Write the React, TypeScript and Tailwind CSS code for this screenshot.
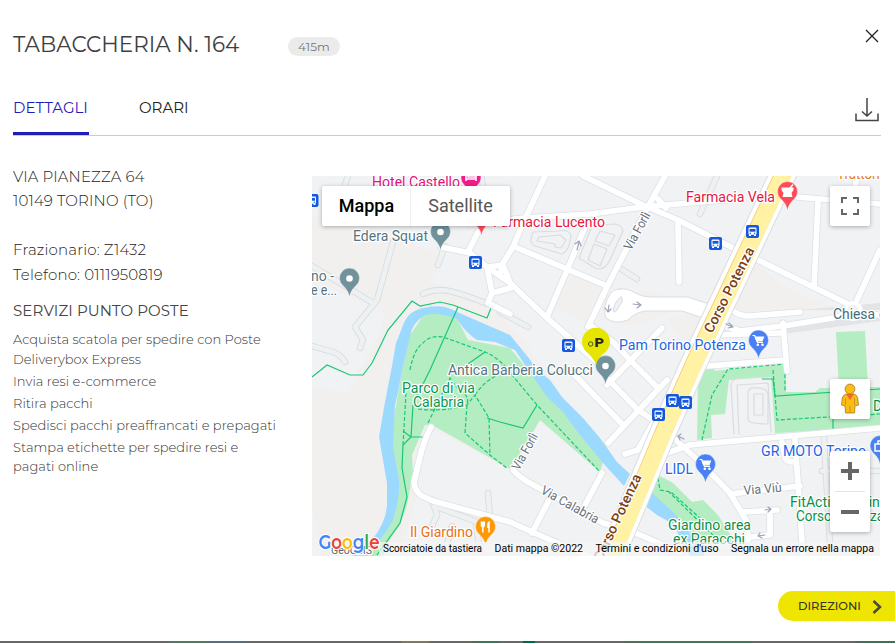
import React from "react";

type LabelProps = {
  x: number;
  y: number;
  w?: number;
  color: string;
  size?: number;
  rotate?: number;
  weight?: number;
  children: string;
};

function Label({ x, y, w, color, size = 14, rotate = 0, weight = 400, children }: LabelProps) {
  return (
    <text
      x={x}
      y={y}
      textLength={w}
      lengthAdjust="spacingAndGlyphs"
      fontSize={size}
      fontWeight={weight}
      fill={color}
      stroke="#fff"
      strokeWidth={2.5}
      strokeLinejoin="round"
      paintOrder="stroke"
      transform={rotate ? `rotate(${rotate} ${x} ${y})` : undefined}
    >
      {children}
    </text>
  );
}

function Pin({ x, y, color, children }: { x: number; y: number; color: string; children?: React.ReactNode }) {
  return (
    <g transform={`translate(${x} ${y})`}>
      <path
        d="M0 18.5C-1 13-3.500 10-6.500 7.200A10 10 0 1 1 6.500 7.200C3.500 10 1 13 0 18.500Z"
        fill={color}
        stroke="#fff"
        strokeOpacity={0.6}
        strokeWidth={0.7}
      />
      {children ?? <circle r={3.3} fill="#fff" />}
    </g>
  );
}

function Bus({ x, y }: { x: number; y: number }) {
  return (
    <g transform={`translate(${x} ${y})`}>
      <rect x={-6.5} y={-6.500} width={13} height={13} rx={2} fill="#1658dd" />
      <rect x={-4} y={-4} width={8} height={7.3} rx={1.300} fill="#fff" />
      <rect x={-3} y={-2.600} width={6} height={2.800} fill="#1658dd" />
      <circle cx={-2.200} cy={1.700} r={0.700} fill="#1658dd" />
      <circle cx={2.200} cy={1.700} r={0.700} fill="#1658dd" />
      <path d="M-3.500 3h2v1.500h-2zM1.500 3h2v1.500h-2z" fill="#fff" />
    </g>
  );
}

function Cart() {
  return (
    <g fill="none" stroke="#fff" strokeWidth={1.2}>
      <path d="M-6-5h2.200L-1 2h5.500" />
      <path d="M-3.200-3.500H5L3.500.3h-5.300Z" fill="#fff" />
      <circle cx={-0.700} cy={4.200} r={0.700} fill="#fff" />
      <circle cx={4} cy={4.200} r={0.700} fill="#fff" />
    </g>
  );
}

const minorRoads = [
  "M393 242L377 300L355 327L363 340L360 348",
  "M312 266L373 303",
  "M438 265L445 246",
  "M423 294Q430 290 443 290Q455 291 488 304",
  "M312 346L333 352Q341 355 345 362",
  "M348 176L344 188",
  "M481 176L484 190",
  "M500 312L528 327",
  "M621 269L637 279",
  "M717 176L700 214",
  "M488 493L490 518",
  "M433 503L437 515L432 526M437 507L488 526M452 526L446 548M476 526L480 550",
  "M824 438L830 545M822 471H880",
];

const mainRoads = [
  "M665 176L650 203L607 287L588 327",
  "M545 176L520 230L513 247L503 263L500 275",
  "M470 224L525 218L590 214L643 207L735 199",
  "M583 176L643 205L678 220L737 250",
  "M758 260L850 305",
  "M515 247L607 286",
  "M585 227L568 268L547 317",
  "M441 247L470 253L487 267L510 283L547 318L597 362",
  "M478 232L468 252",
  "M487 267L492 293L488 303L510 314",
  "M492 293L511 288M487 267L503 265L511 285",
  "M658 199L666 208",
  "M607 378L638 410L653 420",
  "M662 328L607 385",
  "M667 380L608 443",
  "M570 370L623 425",
  "M590 325L613 342L632 362L657 387",
  "M652 425L638 450L625 454",
  "M667 432L700 462L730 493L747 522L748 540",
  "M667 453L690 445L700 444L880 428",
  "M795 440L803 556",
  "M730 494L800 486",
  "M743 512L777 510M770 513V535L750 537",
  "M782 442L785 458Q787 462 795 462",
  "M431 427Q424 440 420 457L414 482Q414 490 422 496L433 501L510 522L557 543L590 556",
  "M516 462L513 470Q518 476 528 482L603 523L633 532L680 552",
  "M602 473L585 505",
  "M550 498L532 533",
  "M818 202L814 287",
  "M797 197L880 204",
  "M880 250L857 300",
  "M857 176L855 187",
  "M735 312Q740 316 750 316L800 312",
  "M725 326L740 331L783 326L833 318L853 313L880 315",
  "M712 335L780 333M783 323L787 371",
  "M708 366L785 360",
  "M678 224L679 282",
];

function MapDrawing() {
  return (
    <svg
      viewBox="312 176 568 380"
      className="block h-full w-full font-[Roboto,sans-serif]"
      role="img"
      aria-label="Mappa"
    >
      <rect x={312} y={176} width={568} height={380} fill="#f0f2f4" />
      <g fill="#f2f0ef">
        <path d="M345 215L400 238L445 257L430 282L488 303L520 335L560 395L622 470L608 482L505 500L425 470L400 556H322L312 510V388L348 392L378 335L385 315L312 278V215Z" />
        <path d="M572 274L605 290L590 325L555 309Z" />
        <path d="M748 258L790 290L840 310L740 316L728 300ZM668 318L712 310L708 340L690 350ZM606 292L640 292L700 300L640 326L600 320Z" />
      </g>
      <path d="M540 422L513 468L602 523L618 485L600 472Z" fill="#f1f2f3" />
      <path d="M428 427L509 469L603 525L500 519L424 497L415 482Z" fill="#f0f2f4" />
      <path d="M783 328L880 312V321L783 334ZM800 310L880 303V310H800Z" fill="#e3e4e6" />

      <g fill="#b5edc2">
        <path d="M403 365L410 335L425 313L445 312L457 318L468 340L510 348L532 375L563 410L603 462L600 472L540 420L530 437L510 469L432 425H425L412 455L413 472L407 505L400 525L388 542L383 556H365L390 520L395 480L389 445Z" />
        <path d="M712 371L785 364L786 392H815L820 388L839 388L836 332L865 331L868 387L880 387V427L775 433L771 377L729 380L725 414L711 415L712 438L697 440Z" />
        <path d="M698 380L702 364L715 367L697 440Z" />
      </g>

      <g fill="#9bd9ff">
        <path d="M392 366L396 343L402 328Q407 311 423 308Q443 303 457 312L487 325L510 335L528 357L537 370L550 380L562 397L583 418L600 438L617 462L630 474L624 486L603 463L580 435L563 412L547 397L525 365L515 350L495 342L477 340Q466 333 457 319Q440 312 425 315Q411 324 410 337L403 366L398 392L395 405L393 447L399 480Q400 500 392 522Q385 534 367 556H352L372 540Q388 520 387 500V483L379 437L385 402Z" />
        <path d="M650 488L667 503L680 513L704 545V556H690L673 524L657 515L644 505Z" />
      </g>
      <path d="M658 475L673 483L692 502L703 500L718 515L736 544L698 545L676 515L651 492Z" fill="#b5edc2" />

      <g fill="none" stroke="#18c777" strokeWidth={1.2}>
        <path d="M312 377L327 365L350 375H363L372 363L388 330L412 301L420 306L440 302L453 305L487 318L491 308M458 307L430 370L416 398M485 352L468 364M413 405L411 437H423M403 445L402 468L407 497L400 523L377 555M403 445L411 437L403 431M487 418L500 422L523 428L537 405" />
        <path
          strokeDasharray="4 2"
          d="M406 393L403 445M410 370Q414 349 423 343Q430 335 443 337L485 352Q500 358 512 375L537 405L600 472M428 423L450 378L458 389Q470 395 467 405L465 433L490 455L508 469M418 409Q445 412 467 405L475 395L489 418L490 455M475 395Q485 380 500 374"
        />
        <path strokeDasharray="4 2" d="M702 440L712 395L728 369L785 364V392M773 370L777 420L880 414M658 478L660 490L671 492L702 520M668 491L720 542" />
        <path d="M762 379H773L775 396L880 389M833 392L833 431" />
      </g>

      <g fill="none" strokeLinecap="round" strokeLinejoin="round">
        {minorRoads.map((d) => (
          <path key={d} d={d} stroke="#d9dde0" strokeWidth={6.5} />
        ))}
        {minorRoads.map((d) => (
          <path key={d} d={d} stroke="#eef1f2" strokeWidth={4.7} />
        ))}
        {mainRoads.map((d) => (
          <path key={d} d={d} stroke="#dde1e5" strokeWidth={7.2} />
        ))}
        {mainRoads.map((d) => (
          <path key={d} d={d} stroke="#fff" strokeWidth={5.7} />
        ))}
        <g stroke="#d9dde0" strokeWidth={1.2}>
          <path d="M533 232Q528 243 535 246L562 254Q570 250 571 235Q568 229 559 231ZM539 237L560 235L566 240L561 248L555 247V244L537 241ZM592 226L579 258L595 268Q604 272 610 260L623 231Q622 225 615 224L600 225ZM600 231L615 235L609 246L595 241ZM594 244L607 249L600 266L588 260Z" />
          <path d="M734 434L731 385Q731 379 740 378L769 377M739 434L737 385L768 383L771 432M755 388Q748 387 748 394V420Q750 424 768 424V395Q767 387 755 388ZM754 394H763V415H754Z" />
        </g>
        <path
          d="M620 289Q628 288 635 293Q643 297 650 297H688L712 305V321L682 311H645Q634 313 628 320Q615 325 606 318Q602 307 610 294Q614 289 620 289Z"
          fill="#fff"
          stroke="#dadee2"
          strokeWidth={1}
        />
        <path d="M621 297Q615 301 613 310Q614 314 617 310L622 302Q623 297 621 297Z" fill="#eff0f3" stroke="#d9dce1" />
        <path d="M785 170L693 365L662 435L608 565" stroke="#dadee3" strokeWidth={27} />
        <path d="M785 170L693 365L662 435L608 565" stroke="#fff" strokeWidth={25} />
        <path d="M785 170L693 365L662 435L608 565" stroke="#f6ca74" strokeWidth={17} />
        <path d="M785.500 170L693.500 365L662.500 435L608.500 565" stroke="#fff2a5" strokeWidth={16.300} />
        <circle cx={853} cy={311} r={8} fill="#eff1f3" stroke="#fff" strokeWidth={4} />
        <path d="M726 324L732 327M729 323L733 327L728 328M577 250L579 242M575 244L579 241L581 246M609 305L608 311M605 308L608 312L611 309M633 304L640 305M637 302L641 305L637 308M678 436L684 439M681 434L678 436L680 440M765 510L770 509M768 507L771 509L768 512M758 536L765 535M760 533L758 536L762 538" stroke="#9ca2bd" strokeWidth={1.200} />
      </g>

      <Bus x={312} y={200.500} />
      <Bus x={475.500} y={262.500} />
      <Bus x={568.500} y={345.500} />
      <Bus x={715.500} y={243.500} />
      <Bus x={752.500} y={231.500} />
      <Bus x={658.500} y={414.500} />
      <Bus x={672.500} y={400.500} />
      <Bus x={685.500} y={402.500} />

      <Pin x={471} y={178} color="#f21d89">
        <path d="M-5-5V3M5-1V3M-5 1H5M-3-1H5V-4H-3Z" fill="none" stroke="#fff" strokeWidth={1.500} />
      </Pin>
      <Pin x={440.500} y={232} color="#71919b" />
      <Pin x={349.500} y={278.500} color="#71919b" />
      <Pin x={481.500} y={217} color="#ff4a57" />
      <Pin x={605.500} y={366} color="#71919b" />
      <Pin x={787.500} y={192} color="#ff4a57">
        <path d="M-6-4.500H2L5-8L6-7L4-4.500H6V-2L4 1L5 5H-5L-4 1L-6-2Z" fill="#fff" />
      </Pin>
      <Pin x={758.500} y={340.500} color="#4a80f5">
        <Cart />
      </Pin>
      <Pin x={705.500} y={464.500} color="#4a80f5">
        <Cart />
      </Pin>
      <Pin x={880} y={446} color="#4a80f5">
        <path d="M-5-2H5V5H-5ZM-2-2V-5H3V-2" fill="none" stroke="#fff" strokeWidth={1.500} />
      </Pin>
      <Pin x={485.500} y={527} color="#ff9805">
        <path d="M-4.800-5.500H-.500V-2Q-.500 0-1.900.5V5.500H-3.400V.5Q-4.800 0-4.800-2ZM1.700 5.500V-3Q2-5.500 4.300-6V5.500H2.800V1H1.700Z" fill="#fff" />
      </Pin>

      <Label x={372} y={187} w={88} color="#e2127b">Hotel Castello</Label>
      <Label x={353} y={241} w={75} color="#567580">Edera Squat</Label>
      <Label x={311} y={281} w={23} color="#567580">no -</Label>
      <Label x={311} y={295} w={26} color="#567580">e e...</Label>
      <Label x={493} y={227} w={112} color="#e6163e">Farmacia Lucento</Label>
      <Label x={686} y={202} w={89} color="#e6163e">Farmacia Vela</Label>
      <Label x={837} y={179} w={50} color="#e47b1b">Trattoria</Label>
      <Label x={619} y={350} w={127} color="#1d65e5">Pam Torino Potenza</Label>
      <Label x={448} y={375} w={145} color="#567580">Antica Barberia Colucci</Label>
      <Label x={833} y={319} w={42} color="#456b7a">Chiesa</Label>
      <Label x={879} y={319} color="#456b7a">d</Label>
      <Label x={402} y={393} w={73} color="#0b9550">Parco di via</Label>
      <Label x={413} y={407} w={51} color="#0b9550">Calabria</Label>
      <Label x={665} y={474} w={28} color="#1d65e5">LIDL</Label>
      <Label x={761} y={456} w={105} color="#1d65e5">GR MOTO Torino</Label>
      <Label x={410} y={537} w={63} color="#e47315">Il Giardino</Label>
      <Label x={668} y={530} w={83} color="#0b8f47">Giardino area</Label>
      <Label x={673} y={544} w={72} color="#0b8f47">ex Paracchi</Label>
      <Label x={790} y={507} w={98} color="#0b8f47">FitActive Torino</Label>
      <Label x={796} y={521} w={88} color="#0b8f47">Corso Potenza</Label>
      <Label x={873} y={411} color="#0b8f47">D</Label>
      <Label x={631} y={251} w={41} color="#687079" size={13} rotate={-61}>Via Forlì</Label>
      <Label x={519} y={471} w={40} color="#687079" size={13} rotate={-61}>Via Forlì</Label>
      <Label x={540} y={493} w={64} color="#687079" size={13} rotate={29}>Via Calabria</Label>
      <Label x={744} y={495} w={38} color="#687079" size={13} rotate={-5}>Via Viù</Label>
      <Label x={712} y={334} w={94} color="#7a3e13" size={14} weight={500} rotate={-63}>Corso Potenza</Label>
      <Label x={602} y={562} w={94} color="#7a3e13" size={14} weight={500} rotate={-65}>Corso Potenza</Label>
      <Label x={331} y={554} w={41} color="#60656b" size={11}>GeoCMS</Label>

      <path d="M596 364.500Q592.500 356.500 586.500 352A14 14 0 1 1 605.500 352Q598.500 356.500 596 364.500Z" fill="#e6e500" />
      <circle cx={590.700} cy={344} r={2.200} fill="none" stroke="#51503b" strokeWidth={1} />
      <text x={594.500} y={347} fontSize={13} fontWeight={900} fill="#29291f" textLength={9.500} lengthAdjust="spacingAndGlyphs">P</text>
    </svg>
  );
}

function Pegman() {
  return (
    <svg viewBox="0 0 20 32" className="h-8 w-5" aria-hidden="true">
      <path d="M6 11Q3 12 2.300 15L1.500 22L5 23L5.500 30H14.500L15 23L18.500 22L17.700 15Q17 12 14 11Z" fill="#fbbc14" stroke="#a77a27" strokeWidth={0.8} />
      <path d="M6 11H14L10 17Z" fill="#ef6a2d" />
      <path d="M5.500 15V22M14.500 15V22M10 23V30" stroke="#c28822" strokeWidth={0.800} />
      <circle cx={10} cy={6} r={4.900} fill="#fbbc14" stroke="#a77a27" strokeWidth={0.8} />
    </svg>
  );
}

function MapPanel() {
  return (
    <section className="relative h-[380px] w-[568px] shrink-0 overflow-hidden font-[Roboto,sans-serif]">
      <MapDrawing />
      <div className="absolute left-[10px] top-[10px] flex h-10 rounded-[2px] bg-white text-[18px] leading-10 shadow-[0_1px_4px_rgba(0,0,0,0.3)]">
        <button className="w-[89px] border-r border-[#f0f0f0] pl-px font-medium text-black">Mappa</button>
        <button className="w-[99px] text-[#565656]">Satellite</button>
      </div>
      <button className="absolute right-[10px] top-[10px] flex h-10 w-10 items-center justify-center rounded-[2px] bg-white shadow-[0_1px_4px_rgba(0,0,0,0.3)]">
        <svg viewBox="0 0 18 18" className="h-[18px] w-[18px]">
          <path d="M1 6V1H6M12 1H17V6M17 12V17H12M6 17H1V12" fill="none" stroke="#666" strokeWidth={2} />
        </svg>
      </button>
      <button className="absolute right-[10px] top-[203px] flex h-10 w-10 items-center justify-center rounded-[2px] bg-white shadow-[0_1px_4px_rgba(0,0,0,0.3)]">
        <Pegman />
      </button>
      <div className="absolute right-[10px] top-[275px] flex h-[81px] w-10 flex-col items-center rounded-[2px] bg-white shadow-[0_1px_4px_rgba(0,0,0,0.3)]">
        <button className="flex h-10 items-center">
          <svg viewBox="0 0 18 18" className="h-[18px] w-[18px]"><path d="M0 9H18M9 0V18" stroke="#666" strokeWidth={4} /></svg>
        </button>
        <span className="h-px w-[30px] bg-[#e3e3e3]" />
        <button className="flex h-10 items-center">
          <svg viewBox="0 0 18 18" className="h-[18px] w-[18px]"><path d="M0 9H18" stroke="#666" strokeWidth={4} /></svg>
        </button>
      </div>
      <svg viewBox="0 0 66 26" className="absolute bottom-0 left-[5px] h-[26px] w-[66px]">
        <text x={1.500} y={18.500} fontSize={20} textLength={61} lengthAdjust="spacingAndGlyphs" className="font-[Montserrat,Lato,sans-serif]" fontWeight={600} stroke="#fff" strokeWidth={2} paintOrder="stroke">
          <tspan fill="#4285f4">G</tspan>
          <tspan fill="#ea4335">o</tspan>
          <tspan fill="#fbbc05">o</tspan>
          <tspan fill="#4285f4">g</tspan>
          <tspan fill="#34a853">l</tspan>
          <tspan fill="#ea4335">e</tspan>
        </text>
      </svg>
      <div className="absolute bottom-0 right-0 flex h-[14px] items-center bg-[#f5f5f5]/70 text-[11px] leading-[14px] text-black">
        <svg viewBox="0 0 501 14" className="h-[14px] w-[501px]">
          <g fontSize={11}>
            <text x={4} y={10} textLength={99} lengthAdjust="spacingAndGlyphs">Scorciatoie da tastiera</text>
            <text x={115.500} y={10} textLength={88.500} lengthAdjust="spacingAndGlyphs">Dati mappa ©2022</text>
            <text x={216.500} y={10} textLength={123} lengthAdjust="spacingAndGlyphs">Termini e condizioni d'uso</text>
            <text x={352} y={10} textLength={143} lengthAdjust="spacingAndGlyphs">Segnala un errore nella mappa</text>
          </g>
        </svg>
      </div>
    </section>
  );
}

export default function App() {
  return (
    <main className="flex h-[643px] w-[895px] flex-col overflow-hidden bg-white font-[Montserrat,Inter,sans-serif] text-[#333]">
      <header className="flex h-[92px] shrink-0 items-start pl-[13px] pr-[16px]">
        <h1 className="mt-[28px] w-[275px] whitespace-nowrap text-[21.500px] font-[450] leading-8 tracking-[0.03px] text-[#3f3f3f]">TABACCHERIA N. 164</h1>
        <span className="mt-[37px] flex h-[19px] w-[52px] items-center justify-center rounded-full bg-[#ebebeb] text-[12px] font-[450] tracking-[0.1px] text-[#777]">415m</span>
        <button className="ml-auto mt-[28px]" aria-label="Chiudi">
          <svg viewBox="0 0 14 16" className="h-4 w-[14px]"><path d="M1 2L13 14M13 2L1 14" fill="none" stroke="#222" strokeWidth={1.300} /></svg>
        </button>
      </header>

      <nav className="ml-[13px] mr-[14px] flex h-11 shrink-0 border-b border-[#ccc] text-[15px] font-[450] leading-[31px]">
        <button className="flex h-[43px] w-[76px] items-start whitespace-nowrap border-b-3 border-[#1d1dbb] text-[#1d1dbb]">DETTAGLI</button>
        <button className="ml-[50px] flex items-start text-[#222]">ORARI</button>
        <button className="ml-auto mr-[2px] mt-[5px] h-[26px]" aria-label="Scarica">
          <svg viewBox="0 0 24 26" className="h-[26px] w-6" fill="none" stroke="#444" strokeWidth={1.500}>
            <path d="M1 16.500V23.500H23V16.500M12 1V19M7 14.500L12 19L17 14.500" />
          </svg>
        </button>
      </nav>

      <div className="flex h-[420px] shrink-0 pl-[13px]">
        <aside className="w-[299px] whitespace-nowrap pt-[29px]">
          <address className="text-[15px] font-[350] not-italic leading-[24.500px] tracking-[0.15px] text-[#222]">
            <p className="leading-6">VIA PIANEZZA 64</p>
            <p className="leading-6">10149 TORINO (TO)</p>
            <p className="mt-[25px]">Frazionario: Z1432</p>
            <p>Telefono: 0111950819</p>
          </address>
          <h2 className="mt-[12px] text-[15px] font-[450] leading-6 tracking-[0.1px] text-[#444]">SERVIZI PUNTO POSTE</h2>
          <ul className="mt-[7px] flex flex-col gap-[2.500px] text-[13px] font-[350] leading-[19.500px] tracking-[0.03px] text-[#333]">
            <li>Acquista scatola per spedire con Poste<br />Deliverybox Express</li>
            <li>Invia resi e-commerce</li>
            <li>Ritira pacchi</li>
            <li>Spedisci pacchi preaffrancati e prepagati</li>
            <li>Stampa etichette per spedire resi e<br />pagati online</li>
          </ul>
        </aside>
        <div className="pt-[40px]">
          <MapPanel />
        </div>
      </div>

      <footer className="flex h-[87px] shrink-0 flex-col items-end pt-[35px]">
        <button className="flex h-[30px] w-[117px] items-center rounded-l-full bg-[#eee600] pl-5 pt-px text-[11.500px] font-medium text-[#333]">
          <span className="w-[74px] text-left">DIREZIONI</span>
          <svg viewBox="0 0 10 14" className="h-[14px] w-[10px]"><path d="M1.500 1L8 7L1.500 13" fill="none" stroke="#4a4a3b" strokeWidth={2.500} /></svg>
        </button>
        <div className="mt-auto flex h-[2px] w-full bg-[#686868]">
          <i className="ml-[170px] w-[38px] bg-[#537b5d]" />
          <i className="w-[39px] bg-[#536f86]" />
          <i className="ml-[154px] w-[28px] bg-[#817957]" />
          <i className="ml-[43px] w-[28px] bg-[#447454]" />
          <i className="ml-[23px] w-[12px] bg-[#006b3d]" />
          <i className="ml-[90px] w-[126px] bg-[#49745b]" />
          <i className="ml-auto w-[40px] bg-[#456f56]" />
        </div>
      </footer>
    </main>
  );
}
